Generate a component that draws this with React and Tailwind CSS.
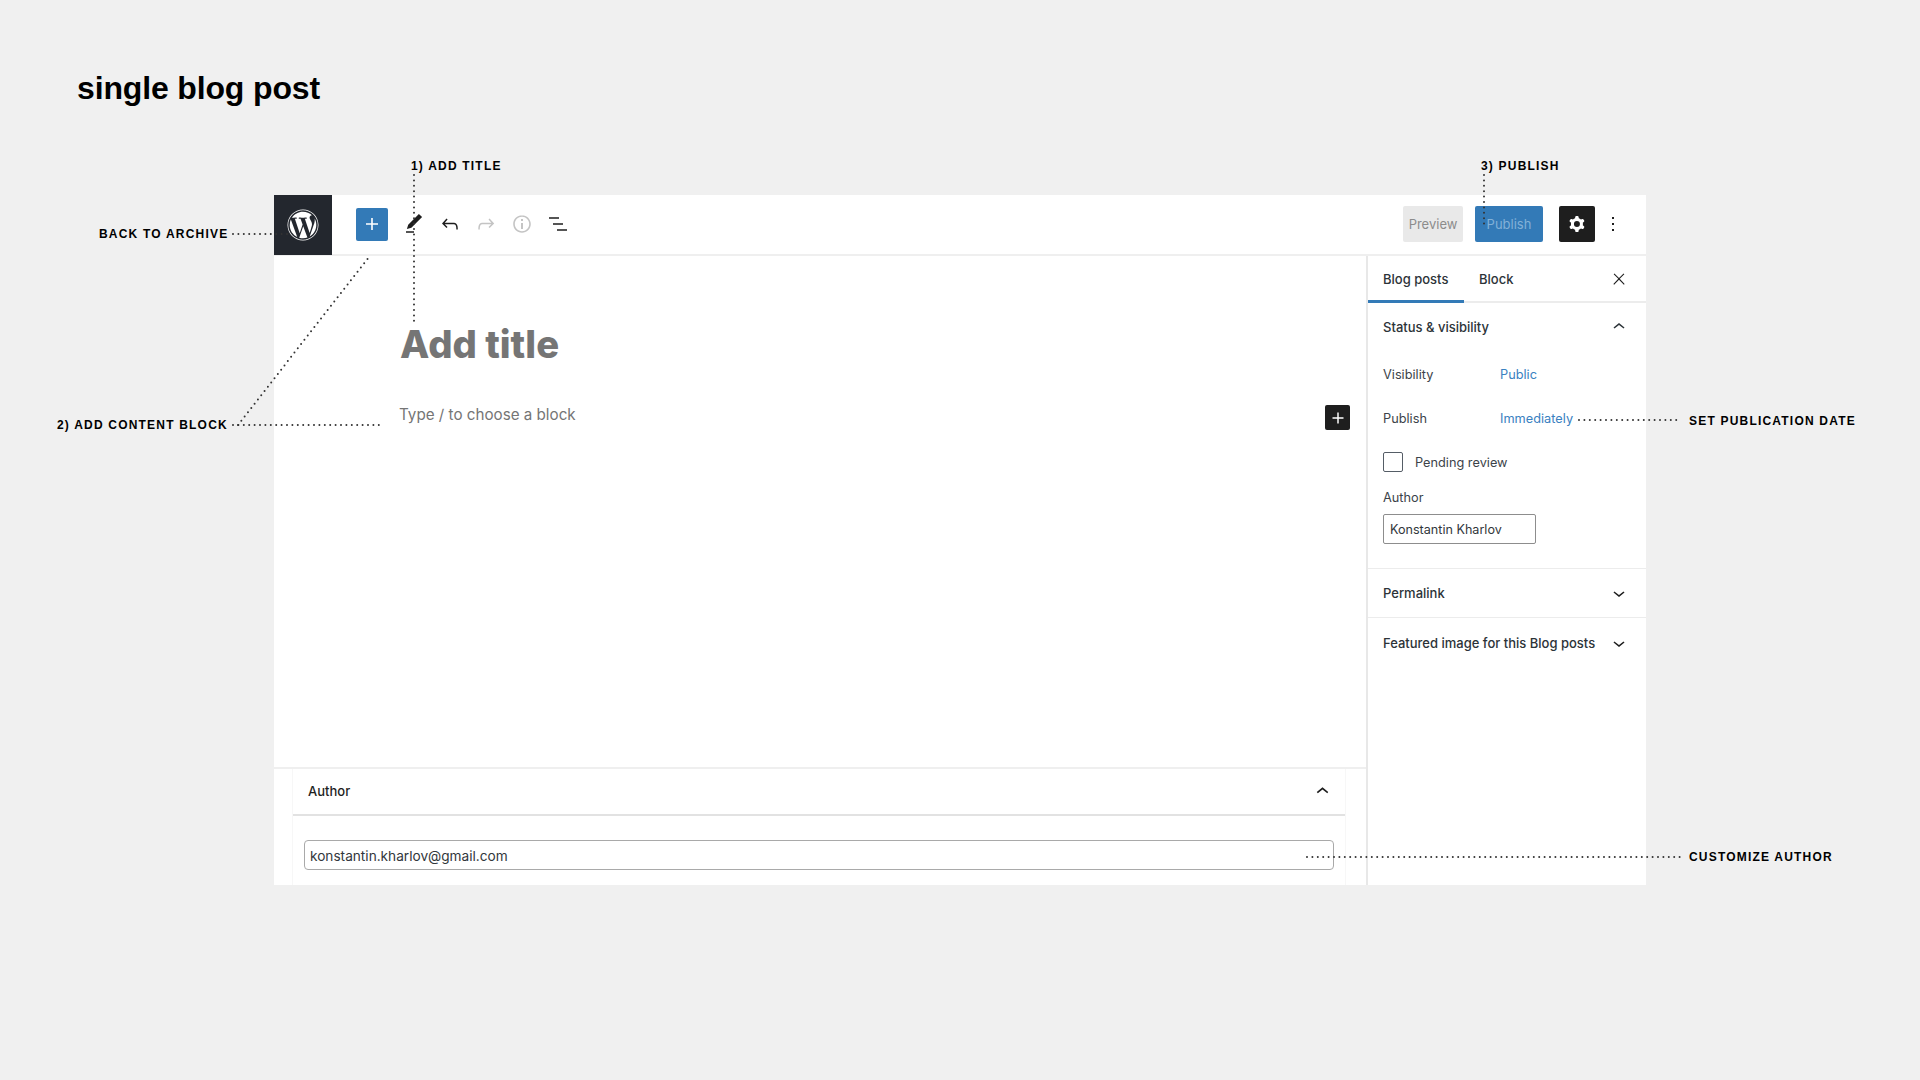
import React from 'react'
import { FaWordpress } from 'react-icons/fa'

const Icon = ({ d, size = 24, className = '' }) => (
    <svg viewBox="0 0 24 24" width={size} height={size} className={`shrink-0 fill-current ${className}`}>
        <path d={d} fillRule="evenodd" />
    </svg>
)

const plus = 'M18 11.2h-5.2V6h-1.6v5.2H6v1.6h5.2V18h1.6v-5.2H18z'
const pencil = 'M20.1 5.1L16.9 2 6.2 12.7l-1.3 4.4 4.5-1.3L20.1 5.1zM4 20.8h8v-1.5H4v1.5z'
const undo = 'M18.3 11.7c-.6-.6-1.4-.9-2.3-.9H6.7l2.9-3.3-1.1-1-4.5 5L8.5 16l1-1-2.7-2.7H16c.5 0 .9.2 1.3.5 1 1 1 3.4 1 4.5v.3h1.5v-.2c0-1.5 0-4.3-1.5-5.7z'
const redo = 'M15.6 6.5l-1.1 1 2.9 3.3H8c-.9 0-1.7.3-2.3.9-1.4 1.5-1.4 4.2-1.4 5.6v.2h1.5v-.3c0-1.1 0-3.5 1-4.5.3-.3.7-.5 1.3-.5h9.2L14.5 15l1.1 1.1 4.6-4.6-4.6-5z'
const info = 'M12 3.2c-4.8 0-8.8 3.9-8.8 8.8 0 4.8 3.9 8.8 8.8 8.8 4.8 0 8.8-3.9 8.8-8.8 0-4.8-4-8.8-8.8-8.8zm0 16c-4 0-7.2-3.3-7.2-7.2C4.8 8 8 4.8 12 4.8s7.2 3.3 7.2 7.2c0 4-3.2 7.2-7.2 7.2zM11 17h2v-6h-2v6zm0-8h2V7h-2v2z'
const listView = 'M3 5.25h10v1.5H3zM7 11.25h10v1.5H7zM11 17.25h10v1.5H11z'
const cog = 'M10.289 4.836A1 1 0 0111.275 4h1.306a1 1 0 01.987.836l.244 1.466c.787.26 1.503.679 2.108 1.218l1.393-.522a1 1 0 011.216.437l.653 1.13a1 1 0 01-.23 1.273l-1.148.944a6.025 6.025 0 010 2.435l1.149.946a1 1 0 01.23 1.272l-.653 1.13a1 1 0 01-1.216.437l-1.394-.522c-.605.54-1.32.958-2.108 1.218l-.244 1.466a1 1 0 01-.987.836h-1.306a1 1 0 01-.986-.836l-.244-1.466a5.995 5.995 0 01-2.108-1.218l-1.394.522a1 1 0 01-1.217-.436l-.653-1.131a1 1 0 01.23-1.272l1.149-.946a6.026 6.026 0 010-2.435l-1.148-.944a1 1 0 01-.23-1.272l.653-1.131a1 1 0 011.217-.437l1.393.522a5.994 5.994 0 012.108-1.218l.244-1.466zM14.929 12a3 3 0 11-6 0 3 3 0 016 0z'
const dots = 'M13 19h-2v-2h2v2zm0-6h-2v-2h2v2zm0-6h-2V5h2v2z'
const close = 'M13 11.8l6.1-6.3-1-1-6.1 6.2-6.1-6.2-1 1 6.1 6.3-6.5 6.7 1 1 6.5-6.6 6.5 6.6 1-1z'
const chevronUp = 'M6.5 12.4L12 8l5.5 4.4-.9 1.2L12 10l-4.5 3.6-1-1.2z'
const chevronDown = 'M17.5 11.6L12 16l-5.5-4.4.9-1.2L12 14l4.5-3.6 1 1.2z'

// annotation leader lines, page coordinates
const leaders = [
    [233, 234, 290, 234],
    [414, 175, 414, 321],
    [233, 425, 379, 425],
    [238, 425, 369, 257],
    [1484, 175, 1484, 225],
    [1579, 420, 1681, 420],
    [1307, 857, 1681, 857],
]

const Note = ({ className, children }) => (
    <span className={`absolute font-['Liberation_Sans',sans-serif] text-[12px] leading-[14px] font-bold tracking-[1.2px] text-black whitespace-nowrap ${className}`}>
        {children}
    </span>
)

const SidebarRow = ({ label, value }) => (
    <div className="flex leading-5 text-[12.75px]">
        <span className="w-[117px] text-[#3c434a]">{label}</span>
        <span className="text-[#3a81c1]">{value}</span>
    </div>
)

const CollapsedPanel = ({ title }) => (
    <div className="flex items-center justify-between h-[49px] pl-[15px] pr-[3px] border-b border-[#ececec] last:border-b-0 font-medium text-[#2c3338]">
        <span className="translate-y-px">{title}</span>
        <Icon d={chevronDown} size={24} className="mr-[12px] text-[#1e1e1e]" />
    </div>
)

const App = () => {
    return (
        <div className="relative w-[1920px] h-[1080px] overflow-hidden bg-[#f0f0f0] font-['Inter',sans-serif]">
            <h1 className="pt-[66px] pl-[77px] font-['Liberation_Sans',sans-serif] text-[32px] leading-[44px] font-bold tracking-[-0.15px] text-black">
                single blog post
            </h1>

            <div className="flex flex-col ml-[274px] mt-[85px] w-[1372px] h-[690px] bg-white">
                {/* top bar */}
                <header className="flex items-center h-[61px] pb-px border-b-2 border-[#efefef]">
                    <div className="flex items-center justify-center self-start w-[58px] h-[60px] bg-[#23272e] text-white">
                        <FaWordpress size={32} className="-ml-px" />
                    </div>
                    <div className="flex items-center justify-center ml-6 w-8 h-[33px] rounded-[2px] bg-[#337ab7] text-white">
                        <Icon d={plus} />
                    </div>
                    <div className="flex items-center gap-3 ml-[14px]">
                        <Icon d={pencil} className="text-[#1e1e1e]" />
                        <Icon d={undo} className="text-[#1e1e1e]" />
                        <Icon d={redo} className="text-[#c4c4c4]" />
                        <Icon d={info} className="text-[#c4c4c4]" />
                        <Icon d={listView} className="text-[#1e1e1e]" />
                    </div>
                    <div className="flex items-center ml-auto pr-[21px] text-[13px]">
                        <div className="flex items-center justify-center w-[60px] h-9 pt-px rounded-[2px] bg-[#e9e9e9] text-[#8c8c8c]">Preview</div>
                        <div className="flex items-center justify-center ml-3 w-[68px] h-9 pt-px rounded-[2px] bg-[#337ab7] text-[#82b1d8]">Publish</div>
                        <div className="flex items-center justify-center ml-4 w-9 h-9 rounded-[2px] bg-[#1e1e1e] text-white">
                            <Icon d={cog} />
                        </div>
                        <Icon d={dots} className="ml-[6px] text-[#1e1e1e]" />
                    </div>
                </header>

                <div className="flex flex-1 min-h-0">
                    <main className="flex flex-col flex-1">
                        <div className="flex-1 pl-[125px] pr-4 pt-[65px]">
                            <div className="pl-px text-[38.2px] leading-[46px] font-extrabold text-[#757575]">Add title</div>
                            <div className="flex items-start justify-between mt-[36px]">
                                <span className="text-[15.2px] leading-6 text-[#757575]">Type / to choose a block</span>
                                <div className="flex items-center justify-center w-[25px] h-[25px] mt-[2px] rounded-[2px] bg-[#1e1e1e] text-white">
                                    <Icon d={plus} size={22} />
                                </div>
                            </div>
                        </div>
                        <section className="h-[118px] border-t-2 border-[#efefef]">
                            <div className="h-full ml-[18px] mr-[20px] border-x border-[#f7f7f7]">
                                <div className="flex items-center justify-between h-[47px] pl-[15px] pr-[10px] border-b-2 border-[#e2e2e2] text-[13px] font-medium text-[#1e1e1e]">
                                    <span>Author</span>
                                    <Icon d={chevronUp} size={25} />
                                </div>
                                <input
                                    readOnly
                                    value="konstantin.kharlov@gmail.com"
                                    className="block mt-6 ml-[11px] w-[1030px] h-[30px] pl-[5px] pt-px rounded-[4px] border border-[#a9a9a9] text-[13.65px] text-[#32373c]"
                                />
                            </div>
                        </section>
                    </main>

                    {/* settings sidebar */}
                    <aside className="w-[280px] border-l-2 border-[#e8e8e8] text-[13px]">
                        <div className="flex items-stretch h-[47px] border-b-2 border-[#ececec]">
                            <div className="flex items-center w-[96px] h-[47px] pl-[15px] pt-[4px] border-b-[3px] border-[#337ab7] font-medium text-[#2c3338]">Blog posts</div>
                            <div className="flex items-center pl-[15px] pt-[3px] font-medium text-[#2c3338]">Block</div>
                            <div className="flex items-center ml-auto pr-[18px] pt-px text-[#1e1e1e]">
                                <Icon d={close} size={18} />
                            </div>
                        </div>
                        <div className="pl-[15px] pr-[15px] pt-[15px] pb-[24px] border-b border-[#ececec]">
                            <div className="flex items-center justify-between h-5 font-medium text-[#2c3338]">
                                <span>Status &amp; visibility</span>
                                <Icon d={chevronUp} className="-translate-y-px" />
                            </div>
                            <div className="mt-[27px]">
                                <SidebarRow label="Visibility" value="Public" />
                            </div>
                            <div className="mt-6">
                                <SidebarRow label="Publish" value="Immediately" />
                            </div>
                            <label className="flex items-center gap-3 h-5 mt-[23px] text-[12.75px] text-[#3c434a]">
                                <input type="checkbox" className="appearance-none w-5 h-5 rounded-[2px] border border-[#555d66] bg-white" />
                                <span className="translate-y-px">Pending review</span>
                            </label>
                            <div className="mt-4 leading-5 text-[12.75px] text-[#3c434a]">Author</div>
                            <input
                                readOnly
                                value="Konstantin Kharlov"
                                className="block mt-[6px] w-[153px] h-[30px] pl-[6px] rounded-[2px] border border-[#8d8d8d] text-[12.6px] text-[#32373c]"
                            />
                        </div>
                        <CollapsedPanel title="Permalink" />
                        <CollapsedPanel title="Featured image for this Blog posts" />
                    </aside>
                </div>
            </div>

            {/* annotations */}
            <svg className="absolute top-0 left-0 pointer-events-none" width="1920" height="1080">
                {leaders.map(([x1, y1, x2, y2], i) => (
                    <line key={i} x1={x1} y1={y1} x2={x2} y2={y2} stroke="#333333" strokeWidth="2" strokeLinecap="round" strokeDasharray="0 5.4" />
                ))}
            </svg>
            <Note className="left-[411px] top-[159px]">1) ADD TITLE</Note>
            <Note className="left-[1481px] top-[159px]">3) PUBLISH</Note>
            <Note className="left-[99px] top-[227px]">BACK TO ARCHIVE</Note>
            <Note className="left-[57px] top-[418px]">2) ADD CONTENT BLOCK</Note>
            <Note className="left-[1689px] top-[414px]">SET PUBLICATION DATE</Note>
            <Note className="left-[1689px] top-[850px]">CUSTOMIZE AUTHOR</Note>
        </div>
    )
}

export default App
